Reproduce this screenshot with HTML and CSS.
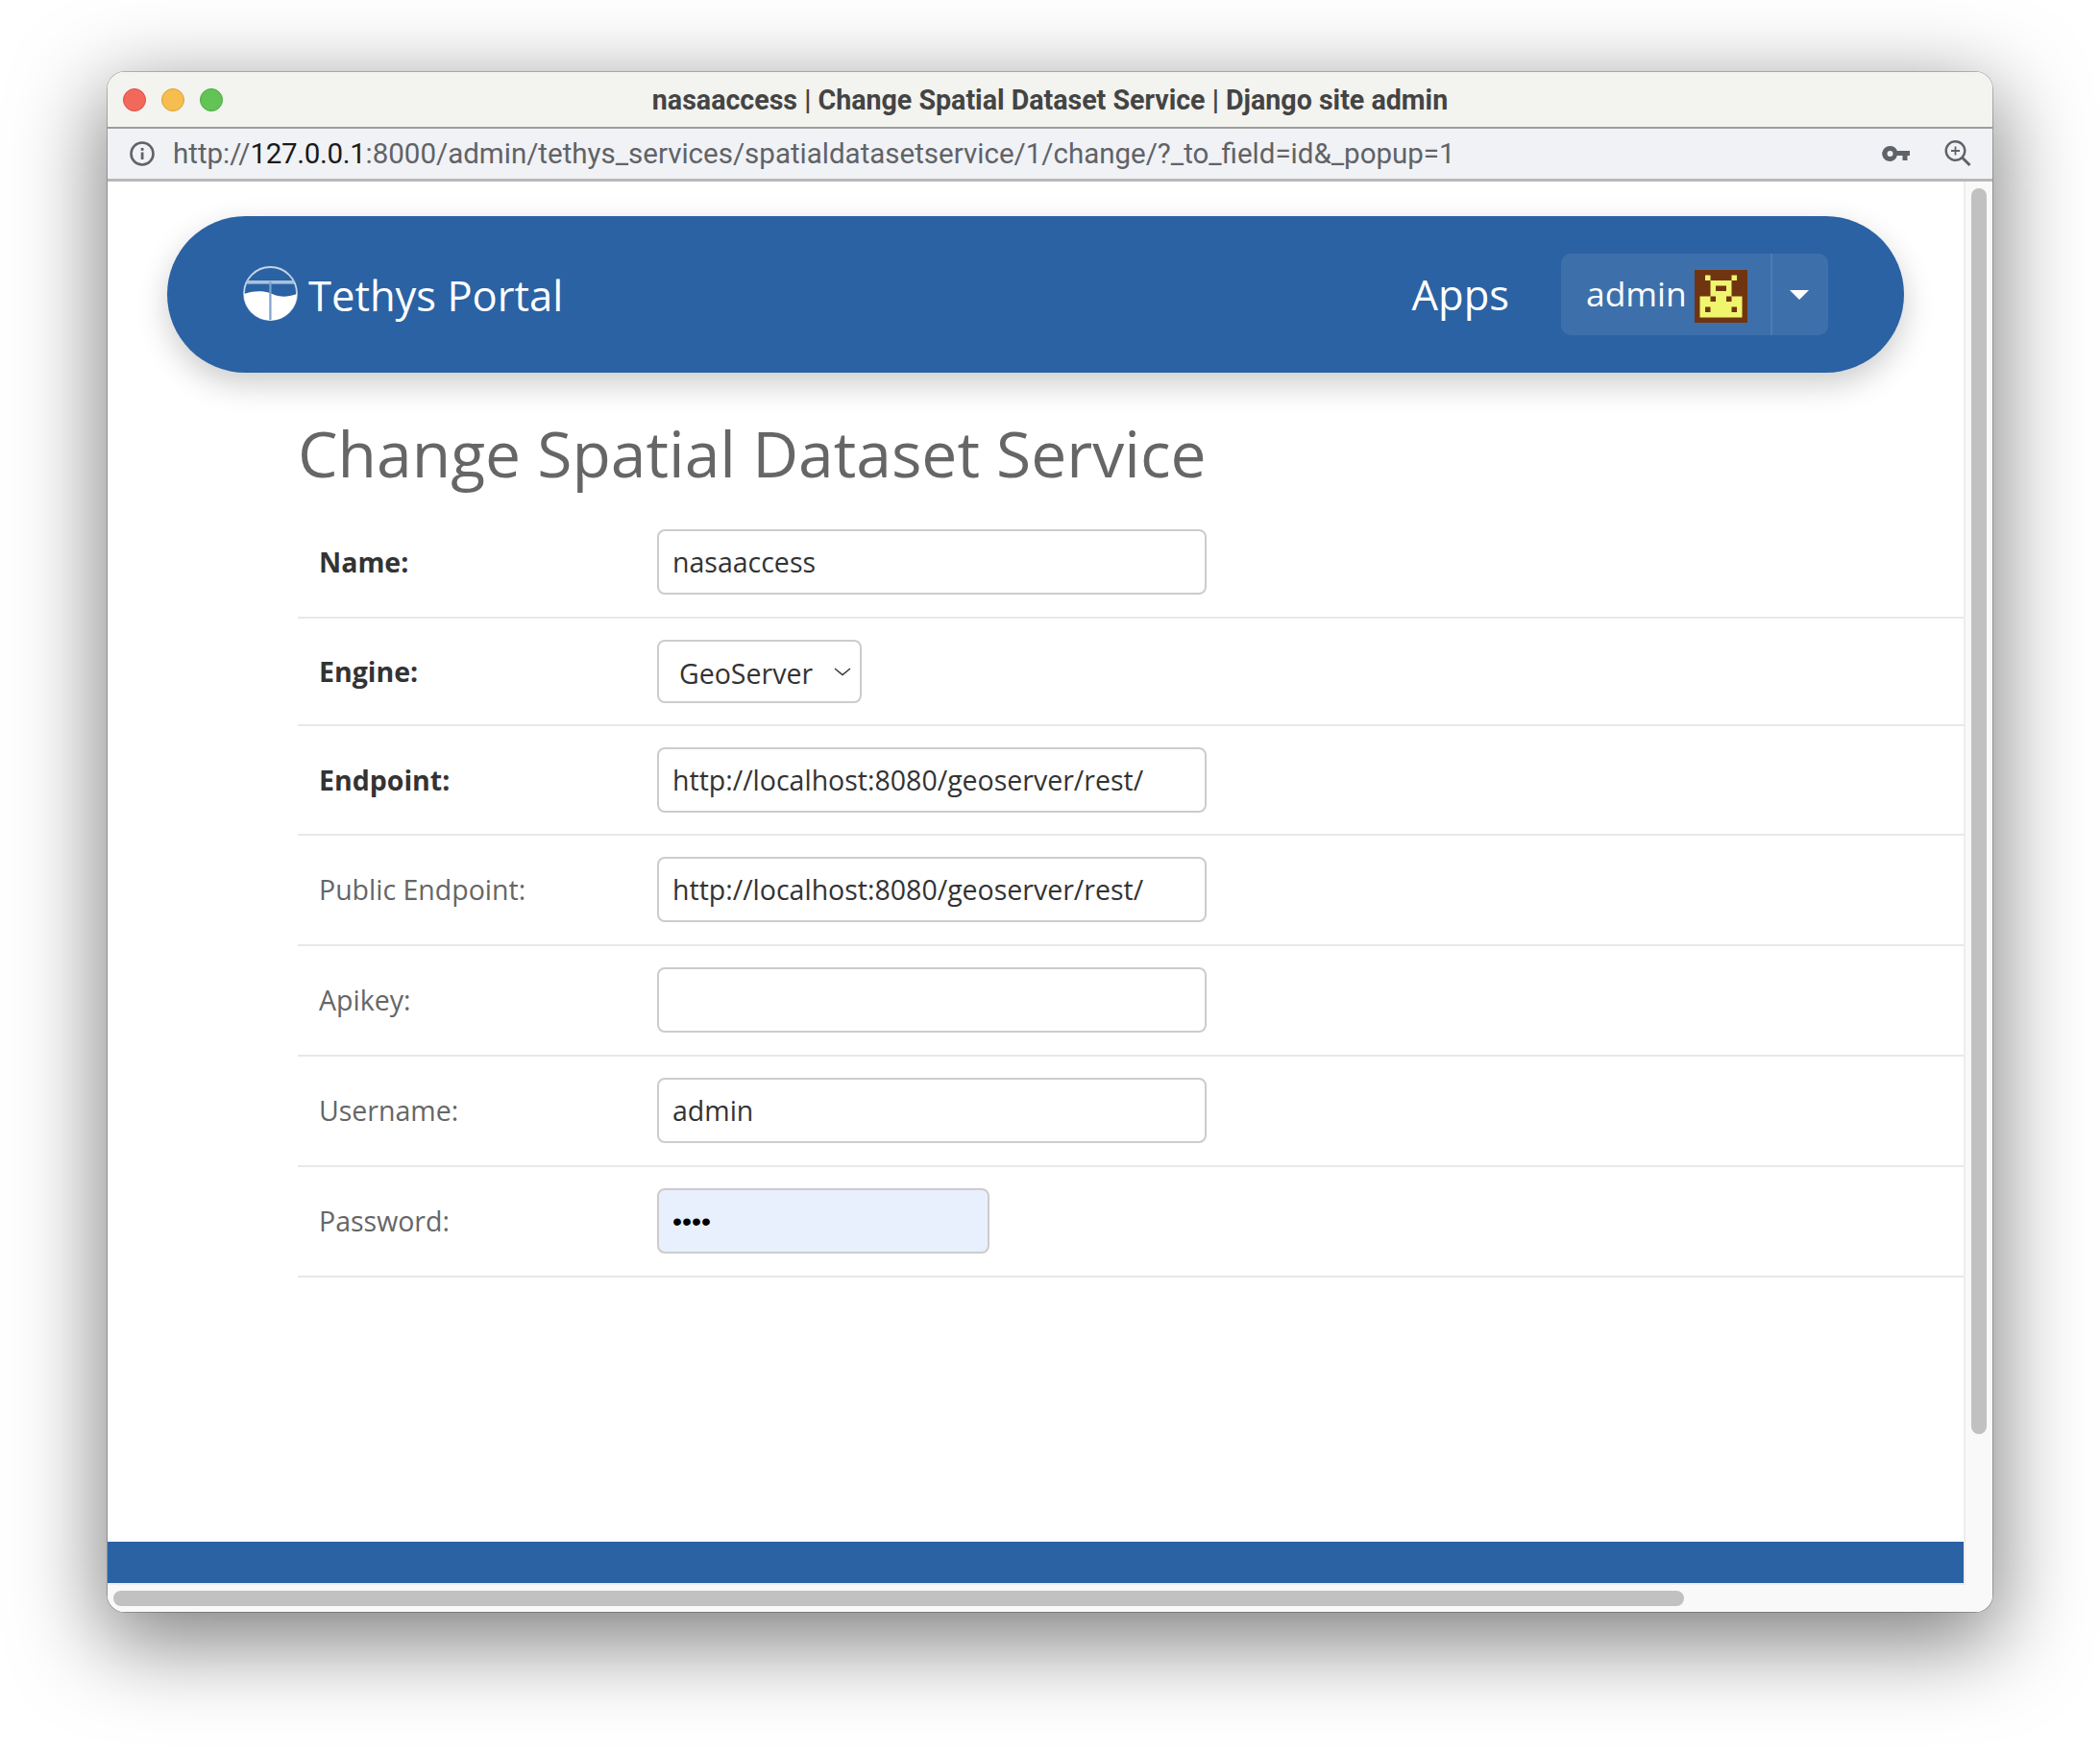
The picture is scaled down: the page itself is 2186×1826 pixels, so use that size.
FILE: index.html
```html
<!DOCTYPE html>
<html lang="en">
<head>
  <meta charset="UTF-8" />
  <title>nasaaccess | Change Spatial Dataset Service | Django site admin</title>
  <link rel="stylesheet" href="styles.css">
</head>
<body>
  <div class="window">
    <div class="titlebar">
      <div class="lights">
        <span class="light light-red"></span>
        <span class="light light-yellow"></span>
        <span class="light light-green"></span>
      </div>
      <div class="window-title">nasaaccess | Change Spatial Dataset Service | Django site admin</div>
    </div>
    <div class="urlbar">
      <svg class="icon-info" width="28" height="28" viewBox="0 0 28 28">
        <circle cx="14" cy="14" r="11.5" fill="none" stroke="#5f6368" stroke-width="2.6" />
        <rect x="12.7" y="12.5" width="2.8" height="7.5" fill="#5f6368" />
        <rect x="12.7" y="8" width="2.8" height="2.8" fill="#5f6368" />
      </svg>
      <div class="url">http://<span class="url-host">127.0.0.1</span>:8000/admin/tethys_services/spatialdatasetservice/1/change/?_to_field=id&amp;_popup=1</div>
      <svg class="icon-key" width="30" height="18" viewBox="0 0 30 18">
        <path fill="#5f6368" fill-rule="evenodd" d="M8.5 1a8 8 0 0 1 7.4 5H29v5h-2.5v5h-5v-5h-5.6A8 8 0 1 1 8.5 1zm0 5a3 3 0 1 0 0 6 3 3 0 0 0 0-6z" />
      </svg>
      <svg class="icon-zoom" width="28" height="28" viewBox="0 0 28 28">
        <circle cx="11.5" cy="11" r="9.8" fill="none" stroke="#5f6368" stroke-width="2.4" />
        <path d="M18.5 18l8 8" stroke="#5f6368" stroke-width="3" fill="none" />
        <path d="M11.5 6.5v9M7 11h9" stroke="#5f6368" stroke-width="1.8" fill="none" />
      </svg>
    </div>

    <div class="browser-body">
      <div class="page">
        <nav class="navbar">
          <a class="brand">
            <svg class="brand-logo" width="57" height="57" viewBox="0 0 57 57">
              <circle cx="28.5" cy="28.5" r="27.5" fill="none" stroke="#c3d4e7" stroke-width="1.8" />
              <path fill="#fff" d="M1 29C8 26 20 25 28 28c6 3 14 6 28 1A27.5 27.5 0 0 1 1 29z" />
              <rect x="4" y="15" width="49" height="3.6" fill="#a9c2dd" />
              <rect x="27.3" y="16" width="2.2" height="40" fill="#7fa2ca" />
            </svg>
            <span class="brand-name">Tethys Portal</span>
          </a>
          <div class="nav-right">
            <a class="nav-link">Apps</a>
            <div class="user-group">
              <div class="user-btn">
                <span class="user-name">admin</span>
                <svg class="avatar" width="55" height="55" viewBox="0 0 10 10">
                  <rect width="10" height="10" fill="#713410" />
                  <path fill="#f0f56e" d="M2 1h1v1H2zM7 1h1v1H7zM3 2h4v3H3zM1 5h8v4H1z" />
                  <path fill="#713410" d="M4 3h2v1H4zM3 5h1v1H3zM6 5h1v1H6zM2 7h1v1H2zM7 7h1v1H7z" />
                </svg>
              </div>
              <div class="user-caret"><span class="caret"></span></div>
            </div>
          </div>
        </nav>

        <div class="content">
          <h1>Change Spatial Dataset Service</h1>
          <div class="form-row">
            <label class="required">Name:</label>
            <input class="field" type="text" value="nasaaccess">
          </div>
          <div class="form-row tight">
            <label class="required">Engine:</label>
            <div class="select-wrap">
              <select class="field-select"><option>GeoServer</option></select>
              <svg class="chevron" width="18" height="9" viewBox="0 0 18 9">
                <path d="M1 1l8 6.5L17 1" fill="none" stroke="#333" stroke-width="1.4" />
              </svg>
            </div>
          </div>
          <div class="form-row tight">
            <label class="required">Endpoint:</label>
            <input class="field" type="text" value="http://localhost:8080/geoserver/rest/">
          </div>
          <div class="form-row">
            <label>Public Endpoint:</label>
            <input class="field" type="text" value="http://localhost:8080/geoserver/rest/">
          </div>
          <div class="form-row">
            <label>Apikey:</label>
            <input class="field" type="text" value="">
          </div>
          <div class="form-row">
            <label>Username:</label>
            <input class="field" type="text" value="admin">
          </div>
          <div class="form-row">
            <label>Password:</label>
            <input class="field field-password" type="password" value="test">
          </div>
        </div>

        <div class="footer"></div>
      </div>
      <div class="vtrack"><div class="vthumb"></div></div>
    </div>
    <div class="htrack"><div class="hthumb"></div></div>
  </div>
</body>
</html>
```

FILE: styles.css
```css
html, body { margin: 0; padding: 0; background: #fff; }
body { font-family: "Open Sans", sans-serif; height: 1826px; overflow: hidden; }

/* browser chrome */
.window {
  position: relative;
  margin: 75px 112px 0;
  width: 1962px;
  height: 1603px;
  display: flex;
  flex-direction: column;
  border-radius: 18px;
  overflow: hidden;
  background: #fff;
}
.titlebar {
  height: 57px;
  flex: none;
  display: flex;
  align-items: center;
  position: relative;
  background: #f3f3ef;
  border-bottom: 2px solid #9e9e9e;
}
.lights { display: flex; gap: 16px; padding-left: 16px; }
.light { width: 24px; height: 24px; border-radius: 50%; box-sizing: border-box; }
.light-red { background: #f2695c; border: 1px solid #df4d42; }
.light-yellow { background: #f6bd4f; border: 1px solid #dea034; }
.light-green { background: #61c454; border: 1px solid #4aa93e; }
.window-title {
  position: absolute;
  left: 0;
  right: 0;
  text-align: center;
  font-family: Roboto, sans-serif;
  font-weight: 700;
  font-size: 28.6px;
  color: #444;
}
.urlbar {
  height: 52px;
  flex: none;
  display: flex;
  align-items: center;
  background: #f1f2f5;
  border-bottom: 3px solid #b8b8b8;
}
.icon-info { margin-left: 22px; flex: none; }
.url {
  flex: 1;
  margin-left: 18px;
  font-family: Roboto, sans-serif;
  font-size: 29.5px;
  color: #5f6368;
  white-space: nowrap;
}
.url-host { color: #1a1a1a; letter-spacing: -.3px; }
.icon-key { flex: none; margin-right: 35px; }
.icon-zoom { flex: none; margin-right: 22px; }

.browser-body { flex: 1; display: flex; min-height: 0; }
.page {
  width: 1932px;
  flex: none;
  display: flex;
  flex-direction: column;
  border-right: 2px solid #ededed;
  border-bottom: 2px solid #ededed;
}

/* navbar */
.navbar {
  margin: 36px 62px 0;
  height: 163px;
  flex: none;
  display: flex;
  align-items: center;
  justify-content: space-between;
  padding: 0 79px;
  background: #2a62a4;
  border-radius: 82px;
  box-shadow: 0 12px 32px rgba(0, 0, 0, .2);
  color: #fff;
}
.brand { display: flex; align-items: center; gap: 11px; }
.brand-logo { margin-top: -2px; }
.brand-name { font-size: 43.5px; margin-top: 2px; }
.nav-right { display: flex; align-items: center; gap: 54px; }
.nav-link { font-size: 43.5px; }
.user-group {
  display: flex;
  height: 85px;
  width: 278px;
  border-radius: 10px;
  background: #3d70ab;
}
.user-btn {
  width: 220px;
  display: flex;
  align-items: center;
  gap: 8px;
  padding-left: 26px;
  box-sizing: border-box;
  border-right: 2px solid #4d7cb3;
}
.user-name { font-size: 35.4px; margin-top: -4px; }
.avatar { flex: none; margin-top: 4px; }
.user-caret { flex: 1; display: flex; align-items: center; justify-content: center; padding-right: 2px; }
.caret {
  width: 0;
  height: 0;
  border-left: 10px solid transparent;
  border-right: 10px solid transparent;
  border-top: 10px solid #fff;
}

/* form */
.content { flex: 1; margin-left: 198px; }
h1 {
  margin: 43px 0 18px;
  font-size: 66px;
  line-height: 80px;
  font-weight: 400;
  color: #666;
}
.form-row {
  display: grid;
  grid-template-columns: 374px 1fr;
  align-items: center;
  padding: 22px 0 23px;
  border-bottom: 2px solid #e8e8e8;
}
.form-row.tight { padding: 22px 0; }
label { padding-left: 22px; font-size: 28.5px; color: #666; }
label.required { font-weight: 700; color: #333; }
.field {
  width: 572px;
  height: 68px;
  box-sizing: border-box;
  padding: 0 14px;
  border: 2px solid #ccc;
  border-radius: 8px;
  font-family: "Open Sans", sans-serif;
  font-size: 28.5px;
  color: #333;
  background: #fff;
}
.field-password { width: 346px; background: #e8f0fd; color: #000; font-family: "Liberation Sans", sans-serif; }
.select-wrap { position: relative; width: 213px; height: 66px; }
.field-select {
  width: 100%;
  height: 100%;
  appearance: none;
  padding: 3px 0 0 21px;
  border: 2px solid #ccc;
  border-radius: 8px;
  background: #fff;
  font-family: "Open Sans", sans-serif;
  font-size: 28.5px;
  color: #333;
}
.chevron { position: absolute; right: 11px; top: 29px; }

.footer { height: 43px; flex: none; background: #2a62a4; }

/* scrollbars */
.vtrack { flex: 1; background: #f9f9f9; padding: 7px 6px 0; }
.vthumb { height: 1297px; border-radius: 8px; background: #c1c1c1; }
.htrack { height: 28px; flex: none; background: #f9f9f9; padding: 6px 0 0 6px; box-sizing: border-box; }
.hthumb { width: 1635px; height: 16px; border-radius: 8px; background: #c1c1c1; }

body::before {
  content: "";
  position: absolute;
  left: 112px;
  top: 75px;
  width: 1962px;
  height: 1603px;
  border-radius: 18px;
  box-shadow: 0 26px 90px 6px rgba(0, 0, 0, .5), 0 0 0 1px rgba(0, 0, 0, .22);
}
```
